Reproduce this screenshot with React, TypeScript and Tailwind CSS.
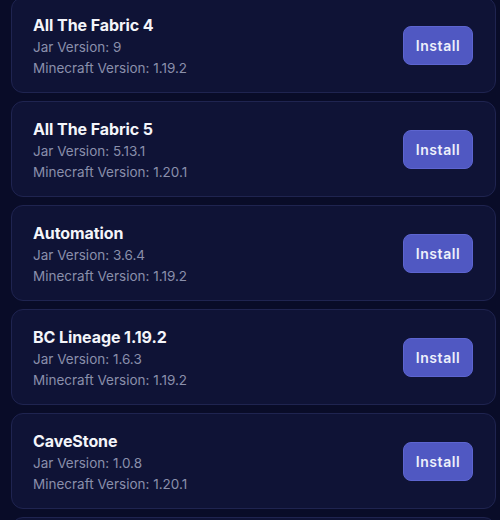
const mods = [
  { name: "All The Fabric 4", jar: "9", mc: "1.19.2" },
  { name: "All The Fabric 5", jar: "5.13.1", mc: "1.20.1" },
  { name: "Automation", jar: "3.6.4", mc: "1.19.2" },
  { name: "BC Lineage 1.19.2", jar: "1.6.3", mc: "1.19.2" },
  { name: "CaveStone", jar: "1.0.8", mc: "1.20.1" },
];

export default function App() {
  return (
    <div
      className="h-[520px] overflow-hidden bg-[#090c28] pl-[11px] pr-[4px]"
      style={{ fontFamily: "Inter, 'Noto Sans', sans-serif" }}
    >
      <div className="-mt-[3px] flex flex-col gap-2">
        {mods.map((m) => (
          <div
            key={m.name}
            className="flex items-center justify-between rounded-xl border border-[#1f2450] bg-[#0f1336] pl-[21px] pr-[22px] pt-[15px] pb-[14px]"
          >
            <div className="flex flex-col">
              <h3 className="text-[16px] leading-6 font-bold tracking-[-0.005em] text-[#f4f5fa]">{m.name}</h3>
              <p className="text-[13.5px] leading-[21px] text-[#8a8fab]">Jar Version: {m.jar}</p>
              <p className="text-[13.5px] leading-[20px] text-[#8a8fab]">Minecraft Version: {m.mc}</p>
            </div>
            <button className="h-[39px] w-[70px] rounded-lg border border-[#5d65d0] bg-[#5058c2] text-[14px] font-semibold tracking-[0.04em] text-[#eef0fb]">
              Install
            </button>
          </div>
        ))}
        {/* next card, only its top edge shows */}
        <div className="h-[96px] rounded-xl border border-[#1f2450] bg-[#0f1336]" />
      </div>
    </div>
  );
}
